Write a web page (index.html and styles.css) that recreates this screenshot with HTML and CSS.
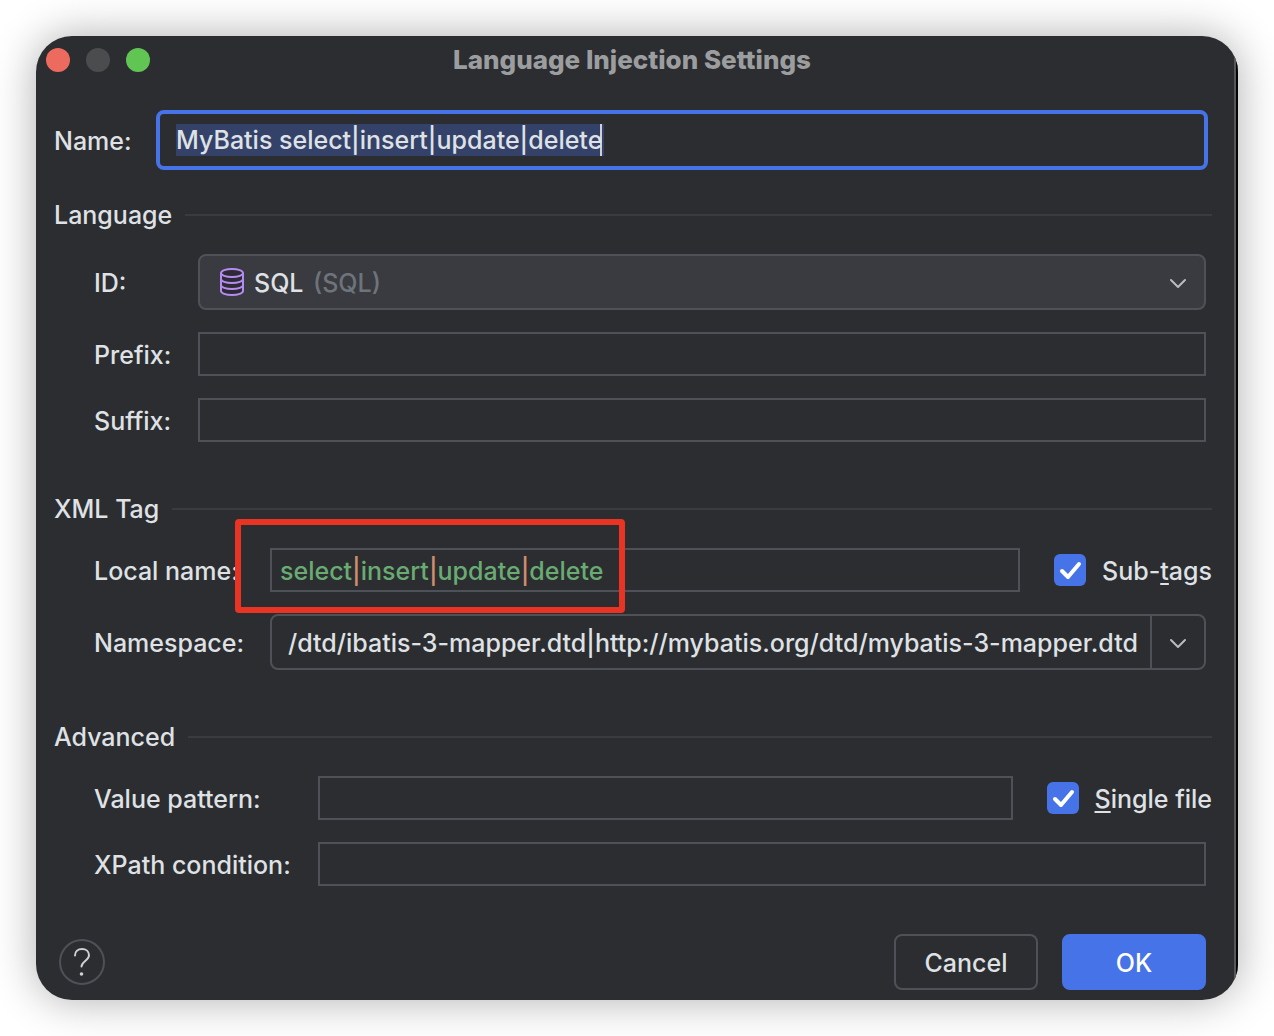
FILE: index.html
```html
<!DOCTYPE html>
<html lang="en">
<head>
  <meta charset="utf-8">
  <meta name="viewport" content="width=device-width, initial-scale=1">
  <title>Language Injection Settings</title>
  <link rel="stylesheet" href="styles.css">
</head>
<body>
  <main class="window">
    <header class="titlebar">
      <div class="lights">
        <button class="light light-close" type="button" aria-label="Close"></button>
        <button class="light light-minimize" type="button" aria-label="Minimize" disabled></button>
        <button class="light light-zoom" type="button" aria-label="Zoom"></button>
      </div>
      <h1 class="title">Language Injection Settings</h1>
    </header>

    <form class="content">
      <div class="name-row">
        <label class="label" for="name">Name:</label>
        <input class="name-input" id="name" type="text" value="MyBatis select|insert|update|delete">
      </div>

      <section class="section">
        <h2 class="heading">Language</h2>
        <div class="fields fields-language">
          <label class="label" for="language-id">ID:</label>
          <div class="control select-box">
            <select class="select" id="language-id">
              <option>SQL</option>
            </select>
            <span class="select-face">
              <svg class="icon-db" viewBox="0 0 26 28" aria-hidden="true">
                <path class="db-body" d="M2 5v18c0 2.200 4.900 4 11 4s11-1.800 11-4V5"/>
                <ellipse class="db-body" cx="13" cy="5" rx="11" ry="4"/>
                <path class="db-line" d="M2 11c0 2.200 4.900 4 11 4s11-1.800 11-4M2 17c0 2.200 4.900 4 11 4s11-1.800 11-4"/>
              </svg>
              <span class="label select-hint">(SQL)</span>
              <svg class="chevron" viewBox="0 0 18 16" aria-hidden="true"><path d="M2 6l7 7 7-7"/></svg>
            </span>
          </div>
          <label class="label" for="prefix">Prefix:</label>
          <input class="control text-input" id="prefix" type="text">
          <label class="label" for="suffix">Suffix:</label>
          <input class="control text-input" id="suffix" type="text">
        </div>
      </section>

      <section class="section">
        <h2 class="heading">XML Tag</h2>
        <div class="fields fields-tag">
          <span class="label" id="local-name-label">Local name:</span>
          <div class="check-row">
            <div class="marked">
              <div class="text-input pattern-input" role="textbox" contenteditable="true" spellcheck="false" aria-labelledby="local-name-label">select<span class="bar">|</span>insert<span class="bar">|</span>update<span class="bar">|</span>delete</div>
            </div>
            <label class="check"><input class="checkbox" type="checkbox" checked><span class="label">Sub-<span class="mnemonic">t</span>ags</span></label>
          </div>
          <label class="label" for="namespace">Namespace:</label>
          <div class="control combo">
            <input class="combo-input" id="namespace" type="text" value="/dtd/ibatis-3-mapper.dtd|http://mybatis.org/dtd/mybatis-3-mapper.dtd">
            <button class="combo-button" type="button" aria-label="Show namespaces">
              <svg class="chevron" viewBox="0 0 18 16" aria-hidden="true"><path d="M2 6l7 7 7-7"/></svg>
            </button>
          </div>
        </div>
      </section>

      <section class="section">
        <h2 class="heading">Advanced</h2>
        <div class="fields fields-advanced">
          <label class="label" for="value-pattern">Value pattern:</label>
          <div class="check-row">
            <input class="text-input" id="value-pattern" type="text">
            <label class="check"><input class="checkbox" type="checkbox" checked><span class="label"><span class="mnemonic">S</span>ingle file</span></label>
          </div>
          <label class="label" for="xpath">XPath condition:</label>
          <input class="control text-input" id="xpath" type="text">
        </div>
      </section>

      <footer class="actions">
        <button class="help" type="button" aria-label="Help">
          <svg class="icon-help" viewBox="0 0 18 30" aria-hidden="true">
            <path d="M2 8.500C2 4.500 5 2 9 2s7 2.500 7 6.300c0 5.200-7.500 6.200-7.500 11.200"/>
            <circle cx="8.500" cy="27" r="1.800"/>
          </svg>
        </button>
        <button class="button" type="button">Cancel</button>
        <button class="button button-primary" type="submit">OK</button>
      </footer>
    </form>
  </main>
</body>
</html>
```
FILE: styles.css
```css
:root {
  --surface: #2b2d30;
  --raised: #393b40;
  --outline: #4e5157;
  --accent: #4674e8;
  --text: #dfe1e5;
}

*,
*::before,
*::after {
  box-sizing: border-box;
}

body {
  margin: 0;
  padding: 36px;
  background: #fff;
  color: var(--text);
  font: 500 25px/32px Inter, "Liberation Sans", sans-serif;
}

input,
select,
button {
  margin: 0;
  color: inherit;
  font: inherit;
}

.window {
  position: relative;
  overflow: hidden;
  border-radius: 36px;
  background: var(--surface);
  box-shadow: 0 0 44px rgba(0, 0, 0, 0.32);
}

/* Thin shaded rim down the right side of the window */
.window::after {
  content: "";
  position: absolute;
  top: 0;
  right: 0;
  bottom: 0;
  width: 4px;
  background: linear-gradient(to right, #55575a 2px, #050505 2px);
}

.titlebar {
  display: grid;
  grid-template-columns: 1fr auto 1fr;
  align-items: center;
  height: 48px;
  padding: 0 20px 0 10px;
}

.lights {
  display: flex;
  gap: 16px;
}

.light {
  width: 24px;
  height: 24px;
  padding: 0;
  border: 0;
  border-radius: 50%;
}

.light-close {
  background: #ed6a5e;
}

.light-minimize {
  background: #4b4c4e;
}

.light-zoom {
  background: #61c554;
}

.title {
  margin: 0;
  color: #9c9d9f;
  font-size: 26px;
  font-weight: 800;
}

.content {
  padding: 26px 26px 10px 18px;
}

.label {
  padding-top: 2px;
}

.name-row {
  display: grid;
  grid-template-columns: 102px 1fr;
  align-items: center;
  margin-bottom: 28px;
  padding-right: 4px;
}

/* The value is shown selected, with the caret at its end */
.name-input {
  width: 100%;
  height: 60px;
  padding: 0 16px;
  border: 4px solid var(--accent);
  border-radius: 8px;
  outline: 0;
  background:
    linear-gradient(#ced0d6, #ced0d6) 440px 10px / 2px 32px no-repeat,
    linear-gradient(#34426a, #34426a) 16px 10px / 428px 32px no-repeat,
    var(--surface);
}

.section {
  margin-bottom: 50px;
}

.section:last-of-type {
  margin-bottom: 48px;
}

.heading {
  display: flex;
  align-items: center;
  gap: 13px;
  margin: 0 0 22px;
  font-size: 25px;
  font-weight: 500;
  line-height: 34px;
}

.heading::after {
  content: "";
  flex: 1;
  height: 2px;
  background: var(--raised);
}

.fields {
  display: grid;
  align-items: center;
  row-gap: 22px;
  padding-left: 40px;
}

.fields-language {
  grid-template-columns: 104px 1fr;
}

.fields-tag {
  grid-template-columns: 176px 1fr;
}

.fields-advanced {
  grid-template-columns: 224px 1fr;
}

.control {
  margin-right: 6px;
}

.text-input {
  flex: 1;
  min-width: 0;
  height: 44px;
  padding: 0 8px;
  border: 2px solid var(--outline);
  border-radius: 0;
  outline: 0;
  background: var(--surface);
}

.select-box {
  display: grid;
}

.select {
  grid-area: 1 / 1;
  height: 56px;
  padding: 2px 54px 0;
  border: 2px solid var(--outline);
  border-radius: 8px;
  appearance: none;
  background: var(--raised);
}

.select-face {
  grid-area: 1 / 1;
  z-index: 1;
  display: flex;
  align-items: center;
  padding: 0 19px 0 21px;
  pointer-events: none;
}

.select-hint {
  flex: 1;
  margin-left: 68px;
  color: #6f737a;
}

.icon-db {
  width: 26px;
  height: 28px;
  fill: none;
  stroke: #b38cf0;
  stroke-width: 2;
}

.db-body {
  fill: #2f2936;
}

.chevron {
  width: 18px;
  height: 16px;
  fill: none;
  stroke: #b9bbc1;
  stroke-width: 2;
  stroke-linecap: round;
  stroke-linejoin: round;
}

.check-row {
  display: flex;
  align-items: center;
  gap: 34px;
}

.marked {
  position: relative;
  flex: 1;
}

/* Red frame that calls out the tag list, laid over the row */
.marked::after {
  content: "";
  position: absolute;
  z-index: 2;
  top: -29px;
  left: -35px;
  width: 390px;
  height: 94px;
  border: 6px solid #e93323;
  border-radius: 4px;
  pointer-events: none;
}

.pattern-input {
  overflow: hidden;
  color: #6aab73;
  line-height: 42px;
  white-space: nowrap;
}

.bar {
  color: #cf8e6d;
}

.check {
  display: flex;
  align-items: center;
  gap: 16px;
}

.checkbox {
  width: 32px;
  height: 32px;
  border-radius: 6px;
  appearance: none;
  background: var(--accent);
}

.checkbox:checked {
  background: var(--accent) url("data:image/svg+xml,%3Csvg xmlns='http://www.w3.org/2000/svg' viewBox='0 0 32 32'%3E%3Cpath d='M8 17l6 6L25 10' fill='none' stroke='white' stroke-width='4' stroke-linecap='round' stroke-linejoin='round'/%3E%3C/svg%3E") center / 32px no-repeat;
}

.mnemonic {
  text-decoration: underline;
  text-decoration-skip-ink: none;
  text-decoration-thickness: 2px;
  text-underline-offset: 3px;
}

.combo {
  display: flex;
  height: 56px;
  border: 2px solid var(--outline);
  border-radius: 8px;
}

.combo-input {
  flex: 1;
  min-width: 0;
  margin: 0 12px 0 16px;
  padding: 2px 0 0;
  border: 0;
  outline: 0;
  background: transparent;
}

.combo-button {
  display: grid;
  place-items: center;
  width: 54px;
  padding: 0;
  border: 0;
  border-left: 2px solid var(--outline);
  background: transparent;
}

.actions {
  display: flex;
  align-items: center;
  gap: 24px;
  padding: 0 6px 0 5px;
}

.help {
  display: grid;
  place-items: center;
  width: 46px;
  height: 46px;
  margin-right: auto;
  padding: 0;
  border: 2px solid var(--outline);
  border-radius: 50%;
  background: transparent;
}

.icon-help {
  width: 18px;
  height: 30px;
  fill: none;
  stroke: #ced0d6;
  stroke-width: 2;
  stroke-linecap: round;
}

.icon-help circle {
  fill: #ced0d6;
  stroke: none;
}

.button {
  width: 144px;
  height: 56px;
  padding: 2px 0 0;
  border: 2px solid var(--outline);
  border-radius: 8px;
  background: transparent;
}

.button-primary {
  border-color: var(--accent);
  background: var(--accent);
  color: #fff;
}
```
